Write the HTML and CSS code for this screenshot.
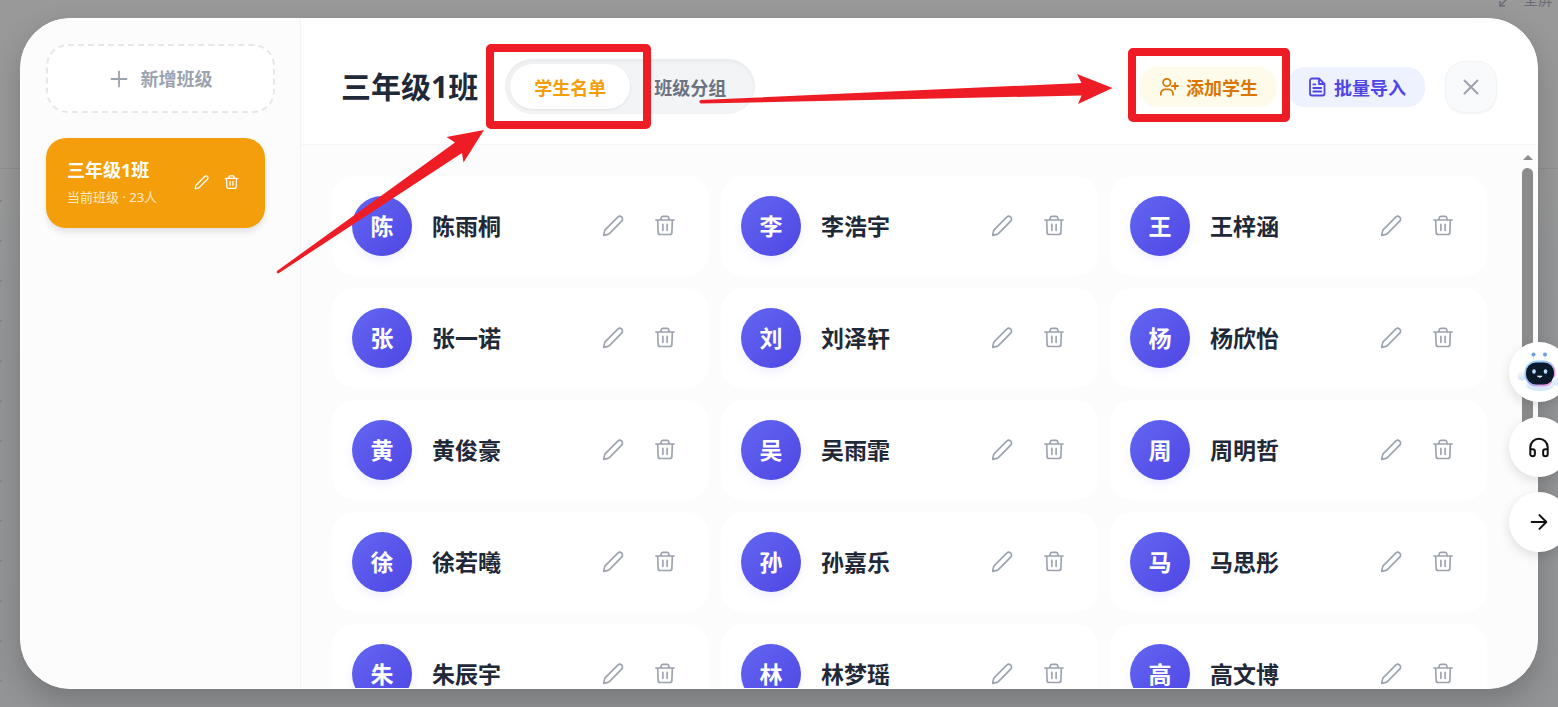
FILE: index.html
```html
<!DOCTYPE html>
<html lang="zh-CN">
<head>
<meta charset="utf-8">
<meta name="viewport" content="width=device-width, initial-scale=1">
<title>班级管理</title>
<link rel="stylesheet" href="styles.css">
</head>
<body>
<svg class="sprite" aria-hidden="true">
  <symbol id="pencil" viewBox="0 0 24 24"><path d="M1.800 22.200l1-4.700a3 3 0 0 1 .8-1.500L17.200 2.400a3 3 0 0 1 4.300 4.300L8 20.300a3 3 0 0 1-1.500.8z"/></symbol>
  <symbol id="trash" viewBox="0 0 24 24"><path d="M2 5.500h20M4 5.500l.5 13.700a2.200 2.200 0 0 0 2.200 2.100h10.600a2.200 2.200 0 0 0 2.200-2.100L20 5.500M7.300 5.500l.6-2.500a1.900 1.900 0 0 1 1.900-1.500h4.400a1.900 1.900 0 0 1 1.900 1.500l.6 2.500M9.700 10.300v6.500M14.300 10.300v6.500"/></symbol>
</svg>

<div class="page" aria-hidden="true">
  <div class="page-line"></div>
  <div class="page-ticks"></div>
  <div class="fullscreen"><svg class="fs-icon" viewBox="0 0 12 12"><path d="M9 3L3 9M3 4v5h5"/></svg><span>全屏</span></div>
</div>

<main class="modal">
  <aside class="sidebar">
    <button class="new-class" type="button"><svg class="icon icon-plus" viewBox="0 0 20 20"><path d="M10 2.500v15M2.500 10h15"/></svg><span>新增班级</span></button>
    <div class="class-list">
      <div class="class-card">
        <div class="class-info"><strong class="class-name">三年级1班</strong><span class="class-meta">当前班级 · 23人</span></div>
        <div class="class-actions">
          <button class="mini" type="button" aria-label="编辑班级"><svg class="icon"><use href="#pencil"/></svg></button>
          <button class="mini" type="button" aria-label="删除班级"><svg class="icon"><use href="#trash"/></svg></button>
        </div>
      </div>
    </div>
  </aside>
  <section class="content">
    <header class="header">
      <h1 class="title">三年级1班</h1>
      <nav class="tabs">
        <button class="tab tab-active" type="button">学生名单</button>
        <button class="tab" type="button">班级分组</button>
      </nav>
      <div class="tools">
        <button class="tool tool-add" type="button"><svg class="icon icon-tool" viewBox="0 0 20 20"><circle cx="7.800" cy="5.600" r="3.700"/><path d="M1.800 17.700v-1a4.300 4.300 0 0 1 4.300-4.300h3.600a4.300 4.300 0 0 1 4.300 4.300v1M16 6v6M13 9h6"/></svg><span>添加学生</span></button>
        <button class="tool tool-import" type="button"><svg class="icon icon-tool" viewBox="0 0 20 20"><path d="M12 1.500H5a2 2 0 0 0-2 2v13a2 2 0 0 0 2 2h10.500a2 2 0 0 0 2-2V7zM12 1.500V7h5.500M6.300 7.400h2M6.300 11h7.900M6.300 14.500h7.900"/></svg><span>批量导入</span></button>
        <button class="close" type="button" aria-label="关闭"><svg class="icon icon-close" viewBox="0 0 20 20"><path d="M3.500 3.500l13 13M16.500 3.500l-13 13"/></svg></button>
      </div>
    </header>
    <div class="scroller">
      <ul class="students">
        <li class="student"><span class="avatar"><b>陈</b></span><span class="name">陈雨桐</span><button class="act" type="button" aria-label="编辑"><svg class="icon"><use href="#pencil"/></svg></button><button class="act" type="button" aria-label="删除"><svg class="icon"><use href="#trash"/></svg></button></li>
        <li class="student"><span class="avatar"><b>李</b></span><span class="name">李浩宇</span><button class="act" type="button" aria-label="编辑"><svg class="icon"><use href="#pencil"/></svg></button><button class="act" type="button" aria-label="删除"><svg class="icon"><use href="#trash"/></svg></button></li>
        <li class="student"><span class="avatar"><b>王</b></span><span class="name">王梓涵</span><button class="act" type="button" aria-label="编辑"><svg class="icon"><use href="#pencil"/></svg></button><button class="act" type="button" aria-label="删除"><svg class="icon"><use href="#trash"/></svg></button></li>
        <li class="student"><span class="avatar"><b>张</b></span><span class="name">张一诺</span><button class="act" type="button" aria-label="编辑"><svg class="icon"><use href="#pencil"/></svg></button><button class="act" type="button" aria-label="删除"><svg class="icon"><use href="#trash"/></svg></button></li>
        <li class="student"><span class="avatar"><b>刘</b></span><span class="name">刘泽轩</span><button class="act" type="button" aria-label="编辑"><svg class="icon"><use href="#pencil"/></svg></button><button class="act" type="button" aria-label="删除"><svg class="icon"><use href="#trash"/></svg></button></li>
        <li class="student"><span class="avatar"><b>杨</b></span><span class="name">杨欣怡</span><button class="act" type="button" aria-label="编辑"><svg class="icon"><use href="#pencil"/></svg></button><button class="act" type="button" aria-label="删除"><svg class="icon"><use href="#trash"/></svg></button></li>
        <li class="student"><span class="avatar"><b>黄</b></span><span class="name">黄俊豪</span><button class="act" type="button" aria-label="编辑"><svg class="icon"><use href="#pencil"/></svg></button><button class="act" type="button" aria-label="删除"><svg class="icon"><use href="#trash"/></svg></button></li>
        <li class="student"><span class="avatar"><b>吴</b></span><span class="name">吴雨霏</span><button class="act" type="button" aria-label="编辑"><svg class="icon"><use href="#pencil"/></svg></button><button class="act" type="button" aria-label="删除"><svg class="icon"><use href="#trash"/></svg></button></li>
        <li class="student"><span class="avatar"><b>周</b></span><span class="name">周明哲</span><button class="act" type="button" aria-label="编辑"><svg class="icon"><use href="#pencil"/></svg></button><button class="act" type="button" aria-label="删除"><svg class="icon"><use href="#trash"/></svg></button></li>
        <li class="student"><span class="avatar"><b>徐</b></span><span class="name">徐若曦</span><button class="act" type="button" aria-label="编辑"><svg class="icon"><use href="#pencil"/></svg></button><button class="act" type="button" aria-label="删除"><svg class="icon"><use href="#trash"/></svg></button></li>
        <li class="student"><span class="avatar"><b>孙</b></span><span class="name">孙嘉乐</span><button class="act" type="button" aria-label="编辑"><svg class="icon"><use href="#pencil"/></svg></button><button class="act" type="button" aria-label="删除"><svg class="icon"><use href="#trash"/></svg></button></li>
        <li class="student"><span class="avatar"><b>马</b></span><span class="name">马思彤</span><button class="act" type="button" aria-label="编辑"><svg class="icon"><use href="#pencil"/></svg></button><button class="act" type="button" aria-label="删除"><svg class="icon"><use href="#trash"/></svg></button></li>
        <li class="student"><span class="avatar"><b>朱</b></span><span class="name">朱辰宇</span><button class="act" type="button" aria-label="编辑"><svg class="icon"><use href="#pencil"/></svg></button><button class="act" type="button" aria-label="删除"><svg class="icon"><use href="#trash"/></svg></button></li>
        <li class="student"><span class="avatar"><b>林</b></span><span class="name">林梦瑶</span><button class="act" type="button" aria-label="编辑"><svg class="icon"><use href="#pencil"/></svg></button><button class="act" type="button" aria-label="删除"><svg class="icon"><use href="#trash"/></svg></button></li>
        <li class="student"><span class="avatar"><b>高</b></span><span class="name">高文博</span><button class="act" type="button" aria-label="编辑"><svg class="icon"><use href="#pencil"/></svg></button><button class="act" type="button" aria-label="删除"><svg class="icon"><use href="#trash"/></svg></button></li>
      </ul>
      <div class="scrollbar" aria-hidden="true"><svg class="scroll-up" viewBox="0 0 10 5"><path d="M0 5L5 0L10 5z"/></svg><div class="thumb"></div></div>
    </div>
  </section>
</main>

<div class="floats">
  <button class="float" type="button" aria-label="智能助手">
    <svg class="robot" viewBox="0 0 44 44">
      <defs>
        <linearGradient id="rim" x1="0" y1="0" x2="1" y2="1"><stop offset="0" stop-color="#7fd8ff"/><stop offset=".5" stop-color="#7aa2ff"/><stop offset=".8" stop-color="#e77fe0"/><stop offset="1" stop-color="#ff9ab5"/></linearGradient>
        <linearGradient id="shell" x1="0" y1="0" x2="0" y2="1"><stop offset="0" stop-color="#f5f9ff"/><stop offset="1" stop-color="#cfe4fb"/></linearGradient>
      </defs>
      <path d="M16.500 5v5M28 5v5" stroke="#dbe8fb" stroke-width="1"/>
      <circle cx="16.500" cy="4.500" r="2" fill="#6f9bea"/><circle cx="28" cy="4.500" r="2" fill="#6f9bea"/>
      <ellipse cx="23" cy="35" rx="14" ry="6" fill="url(#shell)"/>
      <circle cx="5" cy="26" r="4.500" fill="url(#shell)"/>
      <rect x="7.500" y="10.500" width="31" height="26" rx="12" fill="url(#rim)" opacity=".75"/>
      <rect x="9" y="12.500" width="28" height="22" rx="10" fill="#0b1a2b"/>
      <circle cx="39.500" cy="31" r="4.500" fill="url(#shell)"/>
      <ellipse cx="17" cy="21.500" rx="1.800" ry="2.300" fill="#b9dcff"/><ellipse cx="28.500" cy="21.500" rx="1.800" ry="2.300" fill="#b9dcff"/>
      <path d="M20.500 26.200q2.300 2.300 4.600 0z" fill="#e5f2ff" stroke="#e5f2ff"/>
    </svg>
  </button>
  <button class="float" type="button" aria-label="客服"><svg class="icon icon-float" viewBox="0 0 24 24"><path d="M2.500 19v-6.500a9.500 9.500 0 0 1 19 0V19M2.500 14.500H5A2.500 2.500 0 0 1 7.500 17v2.500A2.500 2.500 0 0 1 5 22a2.500 2.500 0 0 1-2.500-2.500zM21.500 14.500H19a2.500 2.500 0 0 0-2.500 2.500v2.500A2.500 2.500 0 0 0 19 22a2.500 2.500 0 0 0 2.500-2.500z"/></svg></button>
  <button class="float" type="button" aria-label="收起"><svg class="icon icon-float" viewBox="0 0 24 24"><path d="M4 12h16M12.500 4.500l7.500 7.500-7.500 7.500"/></svg></button>
</div>

<svg class="marks" aria-hidden="true">
  <g class="mark-box"><rect x="490" y="48" width="157" height="77" rx="1"/><rect x="1132" y="52" width="154" height="66" rx="1"/></g>
  <g class="mark-arrow">
    <path d="M277 271L455 142.500L446.500 137L484 130L463.500 162.500L462 153L279 273Q276 274 277 271z"/>
    <path d="M700.500 100L1081.500 83L1077 74L1112.500 88L1078 104L1081.500 95.500L701 103.500Q698 102 700.500 100z"/>
  </g>
</svg>
</body>
</html>
```
FILE: styles.css
```css
* { box-sizing: border-box; }

body {
  margin: 0;
  height: 100vh;
  padding: 18px 20px;
  overflow: hidden;
  position: relative;
  font-family: "Noto Sans", "Noto Sans CJK SC", sans-serif;
  color: #1f2937;
}

button {
  margin: 0;
  padding: 0;
  border: 0;
  background: none;
  font: inherit;
  color: inherit;
  display: flex;
  align-items: center;
  justify-content: center;
  cursor: pointer;
}

.sprite { position: absolute; width: 0; height: 0; }

.icon {
  width: 22px;
  height: 22px;
  flex: none;
  fill: none;
  stroke: currentColor;
  stroke-width: 1.8;
  stroke-linecap: round;
  stroke-linejoin: round;
}

/* dimmed page behind the dialog */
.page {
  position: absolute;
  inset: 0;
  overflow: hidden;
  background: linear-gradient(#999 0, #999 168px, #949698 300px, #939496 100%);
}
.page-line {
  position: absolute;
  top: 168px;
  left: 0;
  right: 0;
  height: 1px;
  background: #8f8f8f;
}
.page-ticks {
  position: absolute;
  top: 200px;
  bottom: 0;
  left: 0;
  width: 2px;
  background: repeating-linear-gradient(#848688 0, #848688 2px, transparent 2px, transparent 40px);
}
.fullscreen {
  position: absolute;
  top: -11px;
  right: 5px;
  display: flex;
  align-items: center;
  gap: 14px;
  font-size: 15px;
  line-height: 20px;
  color: #6b6e76;
}
.fs-icon { width: 12px; height: 12px; margin-top: 8px; fill: none; stroke: currentColor; stroke-width: 1.5; }

.modal {
  position: relative;
  height: 100%;
  display: flex;
  overflow: hidden;
  background: #fff;
  border: 1px solid #fff;
  border-radius: 50px;
  box-shadow: 0 12px 30px rgba(0, 0, 0, .2);
}

.sidebar {
  width: 280px;
  flex: none;
  padding: 25px;
  display: flex;
  flex-direction: column;
  gap: 25px;
  background: #fcfcfc;
  border-right: 1px solid #f2f3f5;
}
.new-class {
  height: 69px;
  gap: 12px;
  background: #fff;
  border: 2px dashed #e5e7eb;
  border-radius: 22px;
  color: #9ca3af;
  font-size: 18px;
  font-weight: 700;
  line-height: 24px;
}
.icon-plus { width: 20px; height: 20px; }
.class-list { padding-right: 10px; }
.class-card {
  height: 90px;
  padding: 0 19px 2px 21px;
  display: flex;
  align-items: center;
  justify-content: space-between;
  background: #f59e0b;
  border-radius: 20px;
  color: #fff;
  box-shadow: 0 4px 6px rgba(0, 0, 0, .1);
}
.class-info { display: flex; flex-direction: column; gap: 4px; }
.class-name { font-size: 18px; line-height: 26px; }
.class-meta { font-size: 13px; line-height: 20px; color: #fdebc8; }
.class-actions { display: flex; }
.mini { width: 30px; height: 30px; }
.mini .icon { width: 15px; height: 15px; stroke-width: 2; }

.content { flex: 1; min-width: 0; display: flex; flex-direction: column; }
.header {
  padding: 40px 40px 30px;
  display: flex;
  align-items: center;
  border-bottom: 1px solid #f5f5f6;
}
.title { margin: 0; font-size: 30px; font-weight: 700; line-height: 40px; white-space: nowrap; }
.tabs {
  margin-left: 27px;
  padding: 5px;
  display: flex;
  background: #f3f4f6;
  border-radius: 28px;
  box-shadow: inset 0 2px 4px rgba(0, 0, 0, .05);
}
.tab {
  height: 45px;
  padding: 0 24px;
  border-radius: 23px;
  font-size: 18px;
  font-weight: 700;
  color: #6b7280;
  white-space: nowrap;
}
.tab-active { background: #fff; color: #f59e0b; box-shadow: 0 1px 3px rgba(0, 0, 0, .08); }
.tools { margin-left: auto; display: flex; align-items: center; gap: 10px; }
.tool {
  height: 40px;
  padding: 0 19px 0 20px;
  gap: 7px;
  border-radius: 18px;
  font-size: 18px;
  font-weight: 700;
  white-space: nowrap;
}
.tool-add { background: #fffbeb; color: #d97706; }
.tool-import { background: #eef2ff; color: #4f46e5; }
.icon-tool { width: 20px; height: 20px; }
.close {
  width: 52px;
  height: 52px;
  margin-left: 10px;
  background: #f9fafb;
  border: 1px solid #f3f4f6;
  border-radius: 20px;
  color: #9ca3af;
  box-shadow: 0 1px 2px rgba(0, 0, 0, .05);
}
.icon-close { width: 20px; height: 20px; stroke-width: 2; }

.scroller { flex: 1; min-height: 0; display: flex; overflow: hidden; background: #fcfcfc; }
.students {
  flex: 1;
  margin: 0;
  padding: 30px 30px 0;
  list-style: none;
  display: grid;
  grid-template-columns: repeat(3, 1fr);
  gap: 10px;
  align-content: start;
}
.student {
  padding: 20px;
  display: flex;
  align-items: center;
  gap: 4px;
  background: #fff;
  border: 1px solid #fdfdfd;
  border-radius: 24px;
}
.avatar {
  width: 60px;
  height: 60px;
  flex: none;
  display: flex;
  align-items: center;
  justify-content: center;
  border-radius: 50%;
  background: linear-gradient(135deg, #6366f1, #4f46e5);
  box-shadow: 0 4px 8px rgba(99, 102, 241, .1);
  color: #fff;
  font-size: 23px;
  line-height: 32px;
}
.name { flex: 1; margin-left: 16px; font-size: 23px; font-weight: 700; line-height: 32px; white-space: nowrap; }
.act { width: 48px; height: 48px; color: #9ca3af; }

.scrollbar {
  width: 19px;
  flex: none;
  padding: 10px 4px 0;
  display: flex;
  flex-direction: column;
  align-items: center;
  gap: 8px;
}
.scroll-up { width: 10px; height: 5px; flex: none; fill: #8b8b8b; }
.thumb { width: 11px; height: 52%; border-radius: 6px; background: #8b8b8b; }

.floats {
  position: absolute;
  top: 342px;
  right: -11px;
  display: flex;
  flex-direction: column;
  gap: 15px;
}
.float {
  width: 60px;
  height: 60px;
  border-radius: 50%;
  background: #fff;
  color: #111;
  box-shadow: 0 4px 12px rgba(0, 0, 0, .12);
}
.icon-float { width: 22px; height: 22px; stroke-width: 2.2; }
.robot { width: 44px; height: 44px; }

/* red call-outs drawn over the dialog */
.marks { position: absolute; top: 0; left: 0; width: 100%; height: 100%; pointer-events: none; }
.mark-box { fill: none; stroke: #ee1c24; stroke-width: 8; stroke-linejoin: round; }
.mark-arrow { fill: #ee1c24; }
```
